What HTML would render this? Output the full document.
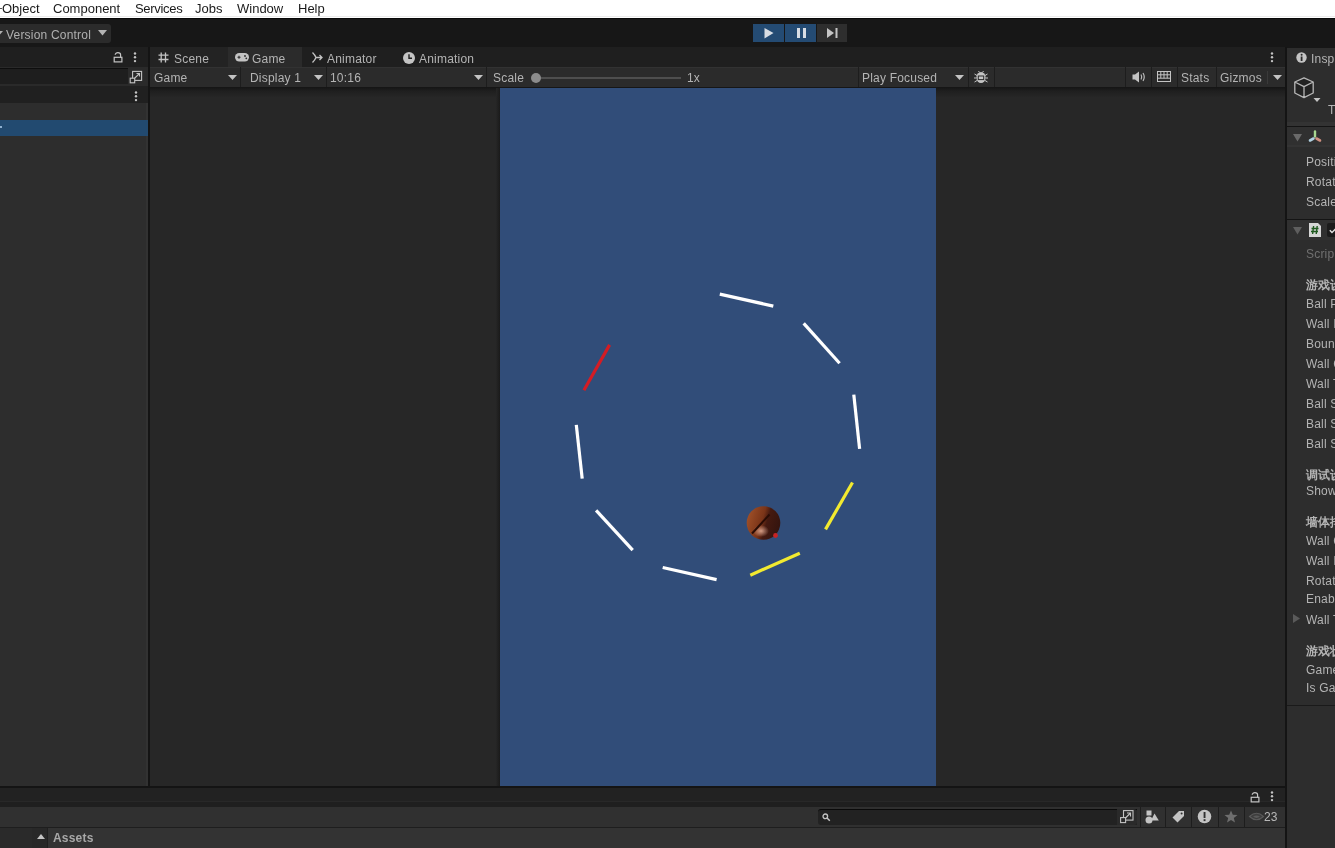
<!DOCTYPE html>
<html><head><meta charset="utf-8">
<style>
*{margin:0;padding:0;box-sizing:border-box}
html,body{width:1335px;height:848px;overflow:hidden;background:#191919;font-family:"Liberation Sans",sans-serif;font-size:12px;color:#b4b4b4}
.a{position:absolute}
.t{position:absolute;white-space:nowrap;line-height:1;letter-spacing:0.2px;will-change:transform}
#menu{left:0;top:0;width:1335px;height:18px;background:#fff;color:#1a1a1a;font-size:13px}
#menu span{position:absolute;top:1px;will-change:transform}
.sep{position:absolute;width:1px;background:#1d1d1d}
svg{position:absolute;overflow:visible}
</style></head><body>
<div id="menu" class="a">
<span style="left:2px">Object</span><i style="position:absolute;left:0;top:8px;width:2px;height:1px;background:#555"></i>
<span style="left:53px">Component</span>
<span style="left:135px;letter-spacing:-0.3px">Services</span>
<span style="left:195px">Jobs</span>
<span style="left:237px">Window</span>
<span style="left:298px">Help</span>
</div>
<div class="a" style="left:0;top:16px;width:1335px;height:1px;background:#ececec"></div><div class="a" style="left:0;top:18px;width:1335px;height:1px;background:#080808"></div><div class="a" style="left:0;top:19px;width:1335px;height:29px;background:#171717"></div>
<!-- version control -->
<div class="a" style="left:0;top:24px;width:111px;height:19px;background:#2b2b2b;border-radius:0 3px 3px 0"></div>
<div class="t" style="left:6px;top:28.5px;font-size:12px;color:#b0b0b0">Version Control</div><svg style="left:-3px;top:31px" width="6" height="4"><path d="M0 0H6L3 3.5Z" fill="#b0b0b0"/></svg>
<svg style="left:98px;top:30px" width="9" height="6"><path d="M0 0H9L4.5 5.5Z" fill="#b4b4b4"/></svg>

<!-- play buttons -->
<div class="a" style="left:753px;top:24px;width:31px;height:18px;background:#244b73"></div>
<div class="a" style="left:785px;top:24px;width:31px;height:18px;background:#244b73"></div>
<div class="a" style="left:817px;top:24px;width:30px;height:18px;background:#2e2e2e"></div>
<svg style="left:764px;top:28px" width="10" height="11"><path d="M0.5 0L9.5 5L0.5 10.5Z" fill="#d8dde4"/></svg>
<div class="a" style="left:797px;top:28px;width:3px;height:10px;background:#d8dde4"></div>
<div class="a" style="left:803px;top:28px;width:3px;height:10px;background:#d8dde4"></div>
<svg style="left:827px;top:28px" width="11" height="11"><path d="M0 0L7 5L0 10Z" fill="#c4c4c4"/><rect x="8.5" y="0" width="2" height="10" fill="#c4c4c4"/></svg>

<!-- ============ hierarchy ============ -->
<div class="a" style="left:0;top:47px;width:148px;height:739px;background:#2d2d2d"></div><div class="a" style="left:146px;top:103px;width:2px;height:683px;background:#323232"></div>
<div class="a" style="left:0;top:47px;width:148px;height:20px;background:#1f1f1f"></div>
<div class="a" style="left:0;top:67px;width:148px;height:19px;background:#2a2a2a"></div>
<div class="a" style="left:0;top:68px;width:128px;height:16px;background:#1e1e1e;border-top:1px solid #0e0e0e"></div>
<div class="a" style="left:0;top:86px;width:148px;height:17px;background:#202020"></div>
<div class="a" style="left:0;top:120px;width:148px;height:16px;background:#224a70"></div>
<!-- lock -->
<svg style="left:113px;top:51px" width="11" height="12"><path d="M2.2 3.8C2.2 0.9 7.6 0.9 7.6 3.8V6.4" fill="none" stroke="#c4c4c4" stroke-width="1.2"/><rect x="1.2" y="6.3" width="7.7" height="4.6" fill="none" stroke="#c4c4c4" stroke-width="1.2"/></svg>
<svg style="left:133px;top:52px" width="4" height="11"><circle cx="2" cy="1.5" r="1.2" fill="#c4c4c4"/><circle cx="2" cy="5.3" r="1.2" fill="#c4c4c4"/><circle cx="2" cy="9.1" r="1.2" fill="#c4c4c4"/></svg>
<svg style="left:129px;top:70px" width="14" height="14"><rect x="3.6" y="1.4" width="9" height="9" fill="none" stroke="#c4c4c4" stroke-width="1.1"/><rect x="1.2" y="8.2" width="4.5" height="4.6" fill="#262626" stroke="#c4c4c4" stroke-width="1.1"/><path d="M5.7 8.2L10.5 3.5M7.5 3.5H10.5V6.5" fill="none" stroke="#c4c4c4" stroke-width="1.1"/></svg>
<svg style="left:134px;top:91px" width="4" height="11"><circle cx="2" cy="1.5" r="1.2" fill="#c4c4c4"/><circle cx="2" cy="5.3" r="1.2" fill="#c4c4c4"/><circle cx="2" cy="9.1" r="1.2" fill="#c4c4c4"/></svg>
<div class="a" style="left:0;top:126px;width:2px;height:2px;background:#8fb0d0"></div>

<div class="a" style="left:148px;top:47px;width:2px;height:741px;background:#141414"></div>

<!-- ============ game panel ============ -->
<div class="a" style="left:150px;top:47px;width:1135px;height:739px;background:#272727"></div>
<div class="a" style="left:150px;top:47px;width:1135px;height:20px;background:#1f1f1f"></div>
<div class="a" style="left:150px;top:47px;width:78px;height:20px;background:#232323"></div>
<div class="a" style="left:228px;top:47px;width:74px;height:20px;background:#2b2b2b"></div>
<!-- tab icons/text -->
<svg style="left:158px;top:52px" width="11" height="11"><path d="M3.2 0.5V10.5M7.5 0.5V10.5M0.5 3.2H10.5M0.5 7.5H10.5" stroke="#c4c4c4" stroke-width="1.3"/></svg>
<div class="t" style="left:174px;top:53px">Scene</div>
<svg style="left:235px;top:53px" width="14" height="9"><rect x="0" y="0" width="14" height="8.5" rx="4.2" fill="#c4c4c4"/><path d="M2.5 4.2H5.5M4 2.7V5.7" stroke="#2b2b2b" stroke-width="1.1"/><circle cx="10" cy="3" r="0.9" fill="#2b2b2b"/><circle cx="11.3" cy="5.3" r="0.9" fill="#2b2b2b"/></svg>
<div class="t" style="left:252px;top:53px">Game</div>
<svg style="left:312px;top:52px" width="11" height="11"><path d="M0.5 0.5C3 3 4 5.5 4 5.5H10M0.5 10.5C3 8 4 5.5 4 5.5M7.5 3L10 5.5L7.5 8" fill="none" stroke="#c4c4c4" stroke-width="1.3"/></svg>
<div class="t" style="left:327px;top:53px">Animator</div>
<svg style="left:403px;top:52px" width="12" height="12"><circle cx="6" cy="6" r="6" fill="#c4c4c4"/><path d="M6 2.3V6.3H9" fill="none" stroke="#1f1f1f" stroke-width="1.4"/></svg>
<div class="t" style="left:419px;top:53px">Animation</div>
<svg style="left:1270px;top:52px" width="4" height="11"><circle cx="2" cy="1.5" r="1.2" fill="#c4c4c4"/><circle cx="2" cy="5.3" r="1.2" fill="#c4c4c4"/><circle cx="2" cy="9.1" r="1.2" fill="#c4c4c4"/></svg>

<!-- toolbar -->
<div class="a" style="left:150px;top:67px;width:1135px;height:20px;background:#2b2b2b;border-top:1px solid #323232"></div>
<div class="sep" style="left:240px;top:67px;height:20px"></div>
<div class="sep" style="left:326px;top:67px;height:20px"></div>
<div class="sep" style="left:486px;top:67px;height:20px"></div>
<div class="sep" style="left:858px;top:67px;height:20px"></div>
<div class="sep" style="left:968px;top:67px;height:20px"></div>
<div class="sep" style="left:994px;top:67px;height:20px"></div>
<div class="sep" style="left:1125px;top:67px;height:20px"></div>
<div class="sep" style="left:1151px;top:67px;height:20px"></div>
<div class="sep" style="left:1177px;top:67px;height:20px"></div>
<div class="sep" style="left:1216px;top:67px;height:20px"></div>
<div class="sep" style="left:1267px;top:71px;height:13px;background:#3a3a3a"></div>
<div class="t" style="left:154px;top:72px">Game</div>
<svg style="left:228px;top:75px" width="9" height="5"><path d="M0 0H9L4.5 5Z" fill="#c4c4c4"/></svg>
<div class="t" style="left:250px;top:72px">Display 1</div>
<svg style="left:314px;top:75px" width="9" height="5"><path d="M0 0H9L4.5 5Z" fill="#c4c4c4"/></svg>
<div class="t" style="left:330px;top:72px">10:16</div>
<svg style="left:474px;top:75px" width="9" height="5"><path d="M0 0H9L4.5 5Z" fill="#c4c4c4"/></svg>
<div class="t" style="left:493px;top:72px">Scale</div>
<div class="a" style="left:536px;top:77px;width:145px;height:2px;background:#4e4e4e"></div>
<div class="a" style="left:531px;top:73px;width:10px;height:10px;border-radius:50%;background:#8c8c8c"></div>
<div class="t" style="left:687px;top:72px">1x</div>
<div class="t" style="left:862px;top:72px">Play Focused</div>
<svg style="left:955px;top:75px" width="9" height="5"><path d="M0 0H9L4.5 5Z" fill="#c4c4c4"/></svg>
<svg style="left:974px;top:70px" width="14" height="14"><ellipse cx="7" cy="7.5" rx="4.6" ry="5.5" fill="#c4c4c4"/><rect x="4.3" y="6" width="5.4" height="3.6" fill="none" stroke="#2b2b2b" stroke-width="1"/><path d="M0.5 4L3 5.5M13.5 4L11 5.5M0 8H2.5M14 8H11.5M0.5 12L3 10.5M13.5 12L11 10.5M4.5 1L5.5 2.5M9.5 1L8.5 2.5" stroke="#c4c4c4" stroke-width="1"/></svg>
<svg style="left:1132px;top:71px" width="13" height="12"><path d="M0.5 3.5H3L7 0.5V11.5L3 8.5H0.5Z" fill="#c4c4c4"/><path d="M9 3.5Q10.5 6 9 8.5M11 2Q13.5 6 11 10" fill="none" stroke="#c4c4c4" stroke-width="1.1"/></svg>
<svg style="left:1157px;top:71px" width="14" height="11"><rect x="0.5" y="0.5" width="13" height="10" fill="none" stroke="#c4c4c4" stroke-width="1"/><path d="M0.5 3.8H13.5M0.5 7.2H13.5M3.8 0.5V7.2M7 0.5V7.2M10.2 0.5V7.2" stroke="#c4c4c4" stroke-width="1"/></svg>
<div class="t" style="left:1181px;top:72px">Stats</div>
<div class="t" style="left:1220px;top:72px">Gizmos</div>
<svg style="left:1273px;top:75px" width="9" height="5"><path d="M0 0H9L4.5 5Z" fill="#c4c4c4"/></svg>

<!-- shadow under toolbar -->
<div class="a" style="left:150px;top:87px;width:1135px;height:10px;background:linear-gradient(#151515,#1f1f1f 40%,#262626)"></div><div class="a" style="left:496px;top:88px;width:4px;height:698px;background:linear-gradient(90deg,#262626,#1a1a1a)"></div>

<!-- game view -->
<svg style="left:500px;top:88px" width="436" height="698" viewBox="500 88 436 698">
<rect x="500" y="88" width="436" height="698" fill="#314d79"/>
<g stroke-width="3.2" stroke-linecap="butt">
<line x1="719.8" y1="294.1" x2="773.3" y2="306.1" stroke="#fff"/>
<line x1="803.7" y1="323.4" x2="839.6" y2="363.3" stroke="#fff"/>
<line x1="853.8" y1="394.7" x2="859.6" y2="448.9" stroke="#fff"/>
<line x1="852.5" y1="482.5" x2="825.5" y2="529.4" stroke="#f2ea30"/>
<line x1="799.8" y1="553.2" x2="750.3" y2="575.2" stroke="#f2ea30"/>
<line x1="662.7" y1="567.5" x2="716.6" y2="579.6" stroke="#fff"/>
<line x1="596.1" y1="510.4" x2="632.7" y2="550.2" stroke="#fff"/>
<line x1="576.3" y1="424.9" x2="582.2" y2="478.6" stroke="#fff"/>
<line x1="609.6" y1="344.9" x2="583.9" y2="390.2" stroke="#d41c24"/>
</g>
<defs><linearGradient id="bg" x1="0" y1="0.3" x2="1" y2="0.6"><stop offset="0" stop-color="#a05028"/><stop offset="0.45" stop-color="#7a3418"/><stop offset="0.6" stop-color="#451a10"/><stop offset="1" stop-color="#33140e"/></linearGradient>
<radialGradient id="hl" cx="0.5" cy="0.5" r="0.5"><stop offset="0" stop-color="#e0a890" stop-opacity="0.9"/><stop offset="1" stop-color="#e0a890" stop-opacity="0"/></radialGradient></defs>
<circle cx="763.5" cy="523" r="16.8" fill="url(#bg)"/>
<ellipse cx="761" cy="531" rx="8" ry="6" fill="url(#hl)"/>
<line x1="752" y1="533.5" x2="769.5" y2="514.5" stroke="#2a0c04" stroke-width="2"/>
<circle cx="775.5" cy="535.5" r="2.4" fill="#c82424"/>
</svg>

<!-- ============ inspector ============ -->
<div class="a" style="left:1285px;top:47px;width:2px;height:741px;background:#141414"></div>
<div class="a" style="left:1287px;top:47px;width:48px;height:739px;background:#2d2d2d"></div>
<div class="a" style="left:1287px;top:47px;width:48px;height:1px;background:#171717"></div>
<svg style="left:1296px;top:52px" width="11" height="11"><circle cx="5.5" cy="5.5" r="5.2" fill="#c4c4c4"/><rect x="4.7" y="4.5" width="1.8" height="4.5" fill="#282828"/><circle cx="5.6" cy="2.8" r="1" fill="#282828"/></svg>
<div class="t" style="left:1311px;top:53px">Inspector</div>
<!-- cube -->
<svg style="left:1294px;top:77px" width="30" height="28"><path d="M10 0.8L19.2 5V16L10 20.6L0.8 16V5Z" fill="#232323"/><path d="M10 0.8L19.2 5V16L10 20.6L0.8 16V5Z M0.8 5L10 9.6L19.2 5 M10 9.6V20.6" fill="none" stroke="#b8b8b8" stroke-width="1.3" stroke-linejoin="round"/><path d="M19.5 21H26.5L23 25Z" fill="#c4c4c4"/></svg>
<div class="t" style="left:1328px;top:104px;font-size:12px">T</div>
<div class="a" style="left:1287px;top:122px;width:48px;height:4px;background:#333333"></div>
<div class="a" style="left:1287px;top:126px;width:48px;height:1px;background:#141414"></div>
<!-- transform header -->
<div class="a" style="left:1287px;top:127px;width:48px;height:18px;background:#303030"></div>
<div class="a" style="left:1287px;top:145px;width:48px;height:2px;background:#343434"></div>
<svg style="left:1293px;top:134px" width="9" height="8"><path d="M0 0H9L4.5 7.5Z" fill="#6a6a6a"/></svg>
<svg style="left:1308px;top:130px" width="15" height="13"><path d="M7 1.5V6.5" stroke="#a8d890" stroke-width="2.4" stroke-linecap="round"/><path d="M5.5 8.5L2 10.5" stroke="#b0d0e0" stroke-width="2.6" stroke-linecap="round"/><path d="M8.5 8.5L12 10.5" stroke="#d09080" stroke-width="2.6" stroke-linecap="round"/></svg>
<div class="t" style="left:1306px;top:156px">Position</div>
<div class="t" style="left:1306px;top:176px">Rotation</div>
<div class="t" style="left:1306px;top:196px">Scale</div>
<div class="a" style="left:1287px;top:219px;width:48px;height:1px;background:#141414"></div>
<div class="a" style="left:1287px;top:220px;width:48px;height:20px;background:#303030"></div>
<svg style="left:1293px;top:227px" width="9" height="8"><path d="M0 0H9L4.5 7.5Z" fill="#5e5e5e"/></svg>
<svg style="left:1309px;top:223px" width="13" height="14"><path d="M0 0H9L12 3V14H0Z" fill="#d6d6d6"/><path d="M4.6 3L3.6 11M8.2 3L7.2 11M2.5 5.5H9.5M2 8.5H9" stroke="#1f5a1f" stroke-width="1.4"/></svg>
<div class="a" style="left:1327px;top:223px;width:14px;height:14px;background:#1b1b1b;border-radius:2px"></div>
<svg style="left:1329px;top:227px" width="8" height="7"><path d="M0.8 3.2L3 5.5L7.5 1" fill="none" stroke="#e0e0e0" stroke-width="1.5"/></svg>
<div class="t" style="left:1306px;top:248px;color:#707070">Scrip</div>
<div class="t" style="left:1306px;top:279px;font-weight:bold">游戏设</div>
<div class="t" style="left:1306px;top:298px">Ball P</div>
<div class="t" style="left:1306px;top:318px">Wall I</div>
<div class="t" style="left:1306px;top:338px">Boun</div>
<div class="t" style="left:1306px;top:358px">Wall C</div>
<div class="t" style="left:1306px;top:378px">Wall T</div>
<div class="t" style="left:1306px;top:398px">Ball S</div>
<div class="t" style="left:1306px;top:418px">Ball S</div>
<div class="t" style="left:1306px;top:438px">Ball S</div>
<div class="t" style="left:1306px;top:469px;font-weight:bold">调试设</div>
<div class="t" style="left:1306px;top:485px">Show</div>
<div class="t" style="left:1306px;top:516px;font-weight:bold">墙体排</div>
<div class="t" style="left:1306px;top:535px">Wall C</div>
<div class="t" style="left:1306px;top:555px">Wall I</div>
<div class="t" style="left:1306px;top:575px">Rotat</div>
<div class="t" style="left:1306px;top:593px">Enab</div>
<svg style="left:1293px;top:614px" width="8" height="10"><path d="M0 0L7 4.5L0 9Z" fill="#5a5a5a"/></svg>
<div class="t" style="left:1306px;top:614px">Wall T</div>
<div class="t" style="left:1306px;top:645px;font-weight:bold">游戏状</div>
<div class="t" style="left:1306px;top:664px">Game</div>
<div class="t" style="left:1306px;top:682px">Is Ga</div>
<div class="a" style="left:1287px;top:705px;width:48px;height:1px;background:#1a1a1a"></div>

<!-- ============ bottom panel ============ -->
<div class="a" style="left:0;top:786px;width:1285px;height:2px;background:#141414"></div>
<div class="a" style="left:0;top:788px;width:1285px;height:13px;background:#222222"></div>
<div class="a" style="left:0;top:801px;width:1285px;height:1px;background:#282828"></div>
<div class="a" style="left:0;top:802px;width:1285px;height:5px;background:#1f1f1f"></div>
<div class="a" style="left:0;top:807px;width:1285px;height:20px;background:#303030"></div>
<div class="a" style="left:0;top:827px;width:1285px;height:21px;background:#333333;border-top:1px solid #1e1e1e"></div>
<div class="a" style="left:0;top:828px;width:32px;height:20px;background:#2a2a2a"></div>
<div class="a" style="left:32px;top:828px;width:16px;height:20px;background:#282828"></div>
<svg style="left:37px;top:834px" width="8" height="5"><path d="M0 5H8L4 0Z" fill="#c4c4c4"/></svg>
<div class="t" style="left:53px;top:832px;font-weight:bold;color:#a8a8a8">Assets</div><div class="a" style="left:47px;top:828px;width:1px;height:20px;background:#202020"></div>
<svg style="left:1250px;top:791px" width="11" height="12"><path d="M2.2 3.8C2.2 0.9 7.6 0.9 7.6 3.8V6.4" fill="none" stroke="#c4c4c4" stroke-width="1.2"/><rect x="1.2" y="6.3" width="7.7" height="4.6" fill="none" stroke="#c4c4c4" stroke-width="1.2"/></svg>
<svg style="left:1270px;top:791px" width="4" height="11"><circle cx="2" cy="1.5" r="1.2" fill="#c4c4c4"/><circle cx="2" cy="5.3" r="1.2" fill="#c4c4c4"/><circle cx="2" cy="9.1" r="1.2" fill="#c4c4c4"/></svg>
<!-- search -->
<div class="a" style="left:818px;top:809px;width:319px;height:16px;background:#222222;border-top:1px solid #0a0a0a;border-radius:3px 0 0 3px"></div>
<svg style="left:822px;top:813px" width="9" height="9"><circle cx="3.3" cy="3.3" r="2.3" fill="none" stroke="#c4c4c4" stroke-width="1.3"/><path d="M5 5L7.8 7.8" stroke="#c4c4c4" stroke-width="1.5"/></svg>
<div class="a" style="left:1117px;top:809px;width:20px;height:16px;background:#2a2a2a;border-radius:0 3px 3px 0"></div>
<svg style="left:1120px;top:810px" width="14" height="14"><rect x="3.5" y="0.6" width="9.5" height="9.5" fill="none" stroke="#c4c4c4" stroke-width="1.1"/><rect x="0.6" y="7.6" width="5" height="5" fill="#2a2a2a" stroke="#c4c4c4" stroke-width="1.1"/><path d="M5.5 8L10.5 3M7 3H10.5V6.5" fill="none" stroke="#c4c4c4" stroke-width="1.1"/></svg>
<div class="sep" style="left:1140px;top:807px;height:20px"></div>
<div class="sep" style="left:1165px;top:807px;height:20px"></div>
<div class="sep" style="left:1191px;top:807px;height:20px"></div>
<div class="sep" style="left:1218px;top:807px;height:20px"></div>
<div class="sep" style="left:1244px;top:807px;height:20px"></div>
<svg style="left:1145px;top:810px" width="14" height="14"><rect x="1.5" y="0.5" width="5" height="5" fill="#c4c4c4"/><circle cx="4" cy="10" r="3.5" fill="#c4c4c4"/><path d="M9.5 3.5L13.8 10.5H6Z" fill="#c4c4c4"/></svg>
<svg style="left:1172px;top:810px" width="13" height="13"><path d="M7 1H12V6L5.5 12.5L0.5 7.5Z" fill="#c4c4c4"/><circle cx="9.6" cy="3.4" r="1" fill="#303030"/></svg>
<svg style="left:1197px;top:809px" width="15" height="15"><circle cx="7.5" cy="7.5" r="6.8" fill="#c4c4c4"/><rect x="6.6" y="3" width="1.9" height="6" fill="#303030"/><rect x="6.6" y="10.2" width="1.9" height="1.9" fill="#303030"/></svg>
<svg style="left:1224px;top:810px" width="14" height="13"><path d="M7 0.5L8.8 4.8L13.5 5L9.8 8L11 12.5L7 10L3 12.5L4.2 8L0.5 5L5.2 4.8Z" fill="#6e6e6e"/></svg>
<svg style="left:1249px;top:812px" width="15" height="9"><path d="M0.5 4.5Q7.5 -2 14.5 4.5Q7.5 11 0.5 4.5Z" fill="#3e3e3e" stroke="#5a5a5a" stroke-width="1.1"/><path d="M4 4.8Q7.5 2 11 4.8Q7.5 7 4 4.8Z" fill="#5a5a5a"/></svg>
<div class="t" style="left:1264px;top:811px;color:#b8b8b8">23</div>
<div class="a" style="left:1285px;top:786px;width:2px;height:62px;background:#141414"></div>
<div class="a" style="left:1287px;top:786px;width:48px;height:62px;background:#2d2d2d"></div>
</body></html>
